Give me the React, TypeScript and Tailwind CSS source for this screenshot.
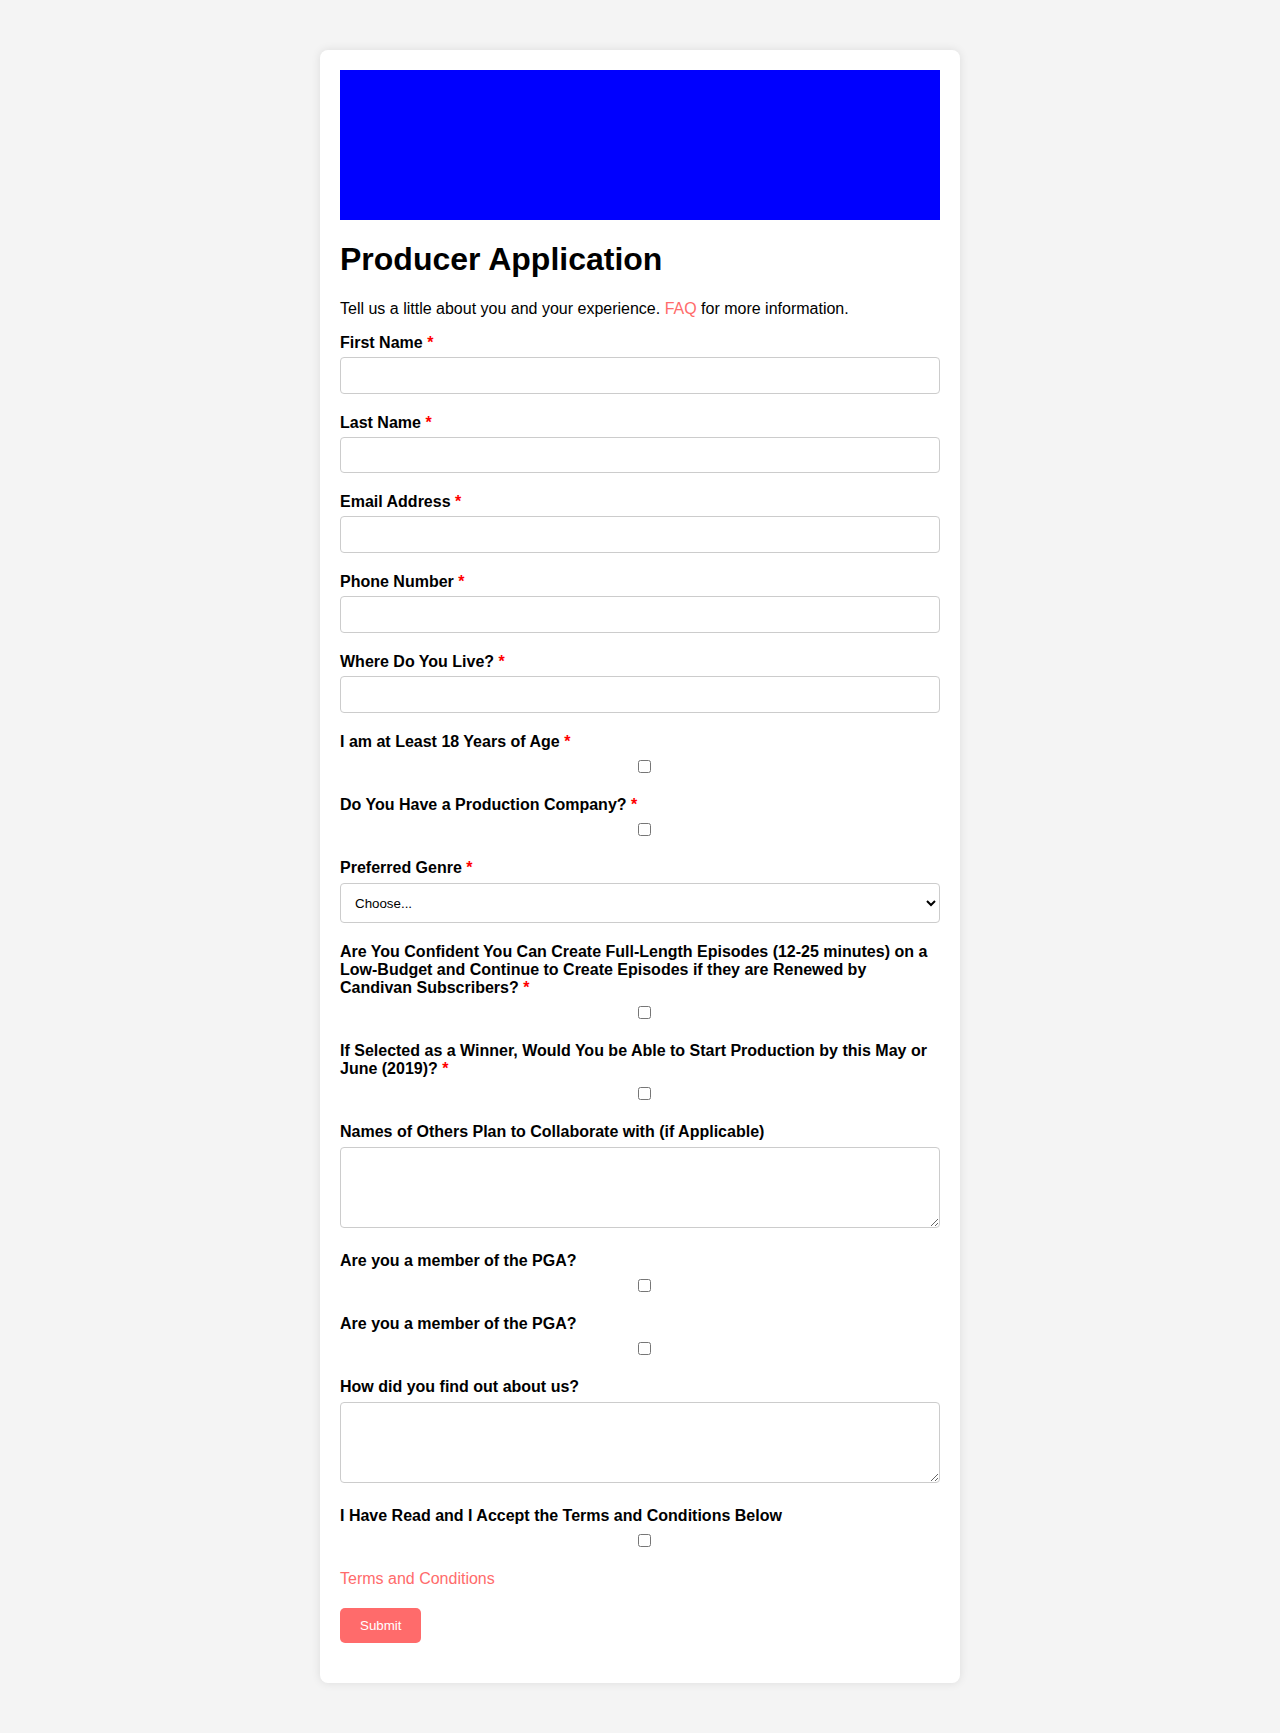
import React from "react";

function Req() {
  return <span className="text-[#ff0000]">*</span>;
}

function Label({ text, required }: { text: string; required?: boolean }) {
  return (
    <label className="mb-[5px] block text-base font-bold leading-[18px] text-black">
      {text} {required ? <Req /> : null}
    </label>
  );
}

function TextField({ label, required }: { label: string; required?: boolean }) {
  return (
    <div className="mb-5">
      <Label text={label} required={required} />
      <input
        type="text"
        className="block h-[36.8px] w-full rounded border border-[#cccccc] bg-white px-[10px] text-base outline-none"
      />
    </div>
  );
}

function CheckField({ label, required }: { label: string; required?: boolean }) {
  return (
    <div className="mb-5">
      <Label text={label} required={required} />
      <div className="flex justify-center pb-[3px] pl-[8px] pt-[4px]">
        <input type="checkbox" className="m-0 block h-[13px] w-[13px]" />
      </div>
    </div>
  );
}

function AreaField({ label, required }: { label: string; required?: boolean }) {
  return (
    <div className="mb-5 pb-[4px]">
      <Label text={label} required={required} />
      <div className="pt-[1px]">
        <textarea className="block h-[81px] w-full rounded border border-[#cccccc] bg-white px-[10px] text-base outline-none" />
      </div>
    </div>
  );
}

export default function App() {
  return (
    <div className="min-h-screen bg-[#f4f4f4] py-[50px] font-['Liberation_Sans',Arial,sans-serif] text-black">
      <div className="mx-auto w-[640px] rounded-lg bg-white p-5 shadow-[0_0_10px_rgba(0,0,0,0.1)]">
        <div className="h-[150px] w-full bg-[#0000ff]" />
        <h1 className="my-[21.44px] text-[32px] font-bold leading-[normal]">Producer Application</h1>
        <p className="mb-4 text-base leading-[normal]">
          Tell us a little about you and your experience. <a className="text-[#ff6b6b]">FAQ</a> for more
          information.
        </p>
        <form onSubmit={(e) => e.preventDefault()}>
          <TextField label="First Name" required />
          <TextField label="Last Name" required />
          <TextField label="Email Address" required />
          <TextField label="Phone Number" required />
          <TextField label="Where Do You Live?" required />
          <CheckField label="I am at Least 18 Years of Age" required />
          <CheckField label="Do You Have a Production Company?" required />
          <div className="mb-5">
            <Label text="Preferred Genre" required />
            <div className="pt-[1.5px]">
              <select className="block h-[39.5px] w-full rounded border border-[#cccccc] bg-white px-[10px] text-[13.33px] text-black outline-none">
                <option>Choose...</option>
                <option>Comedy</option>
                <option>Drama</option>
                <option>Horror</option>
              </select>
            </div>
          </div>
          <CheckField
            label="Are You Confident You Can Create Full-Length Episodes (12-25 minutes) on a Low-Budget and Continue to Create Episodes if they are Renewed by Candivan Subscribers?"
            required
          />
          <CheckField
            label="If Selected as a Winner, Would You be Able to Start Production by this May or June (2019)?"
            required
          />
          <AreaField label="Names of Others Plan to Collaborate with (if Applicable)" />
          <CheckField label="Are you a member of the PGA?" />
          <CheckField label="Are you a member of the PGA?" />
          <AreaField label="How did you find out about us?" />
          <CheckField label="I Have Read and I Accept the Terms and Conditions Below" />
          <a className="mb-5 block text-base leading-[normal] text-[#ff6b6b]">Terms and Conditions</a>
          <div className="mb-5">
            <button
              type="submit"
              className="rounded-[5px] bg-[#ff6b6b] px-5 py-[10px] text-[13.33px] leading-[normal] text-white"
            >
              Submit
            </button>
          </div>
        </form>
      </div>
    </div>
  );
}
